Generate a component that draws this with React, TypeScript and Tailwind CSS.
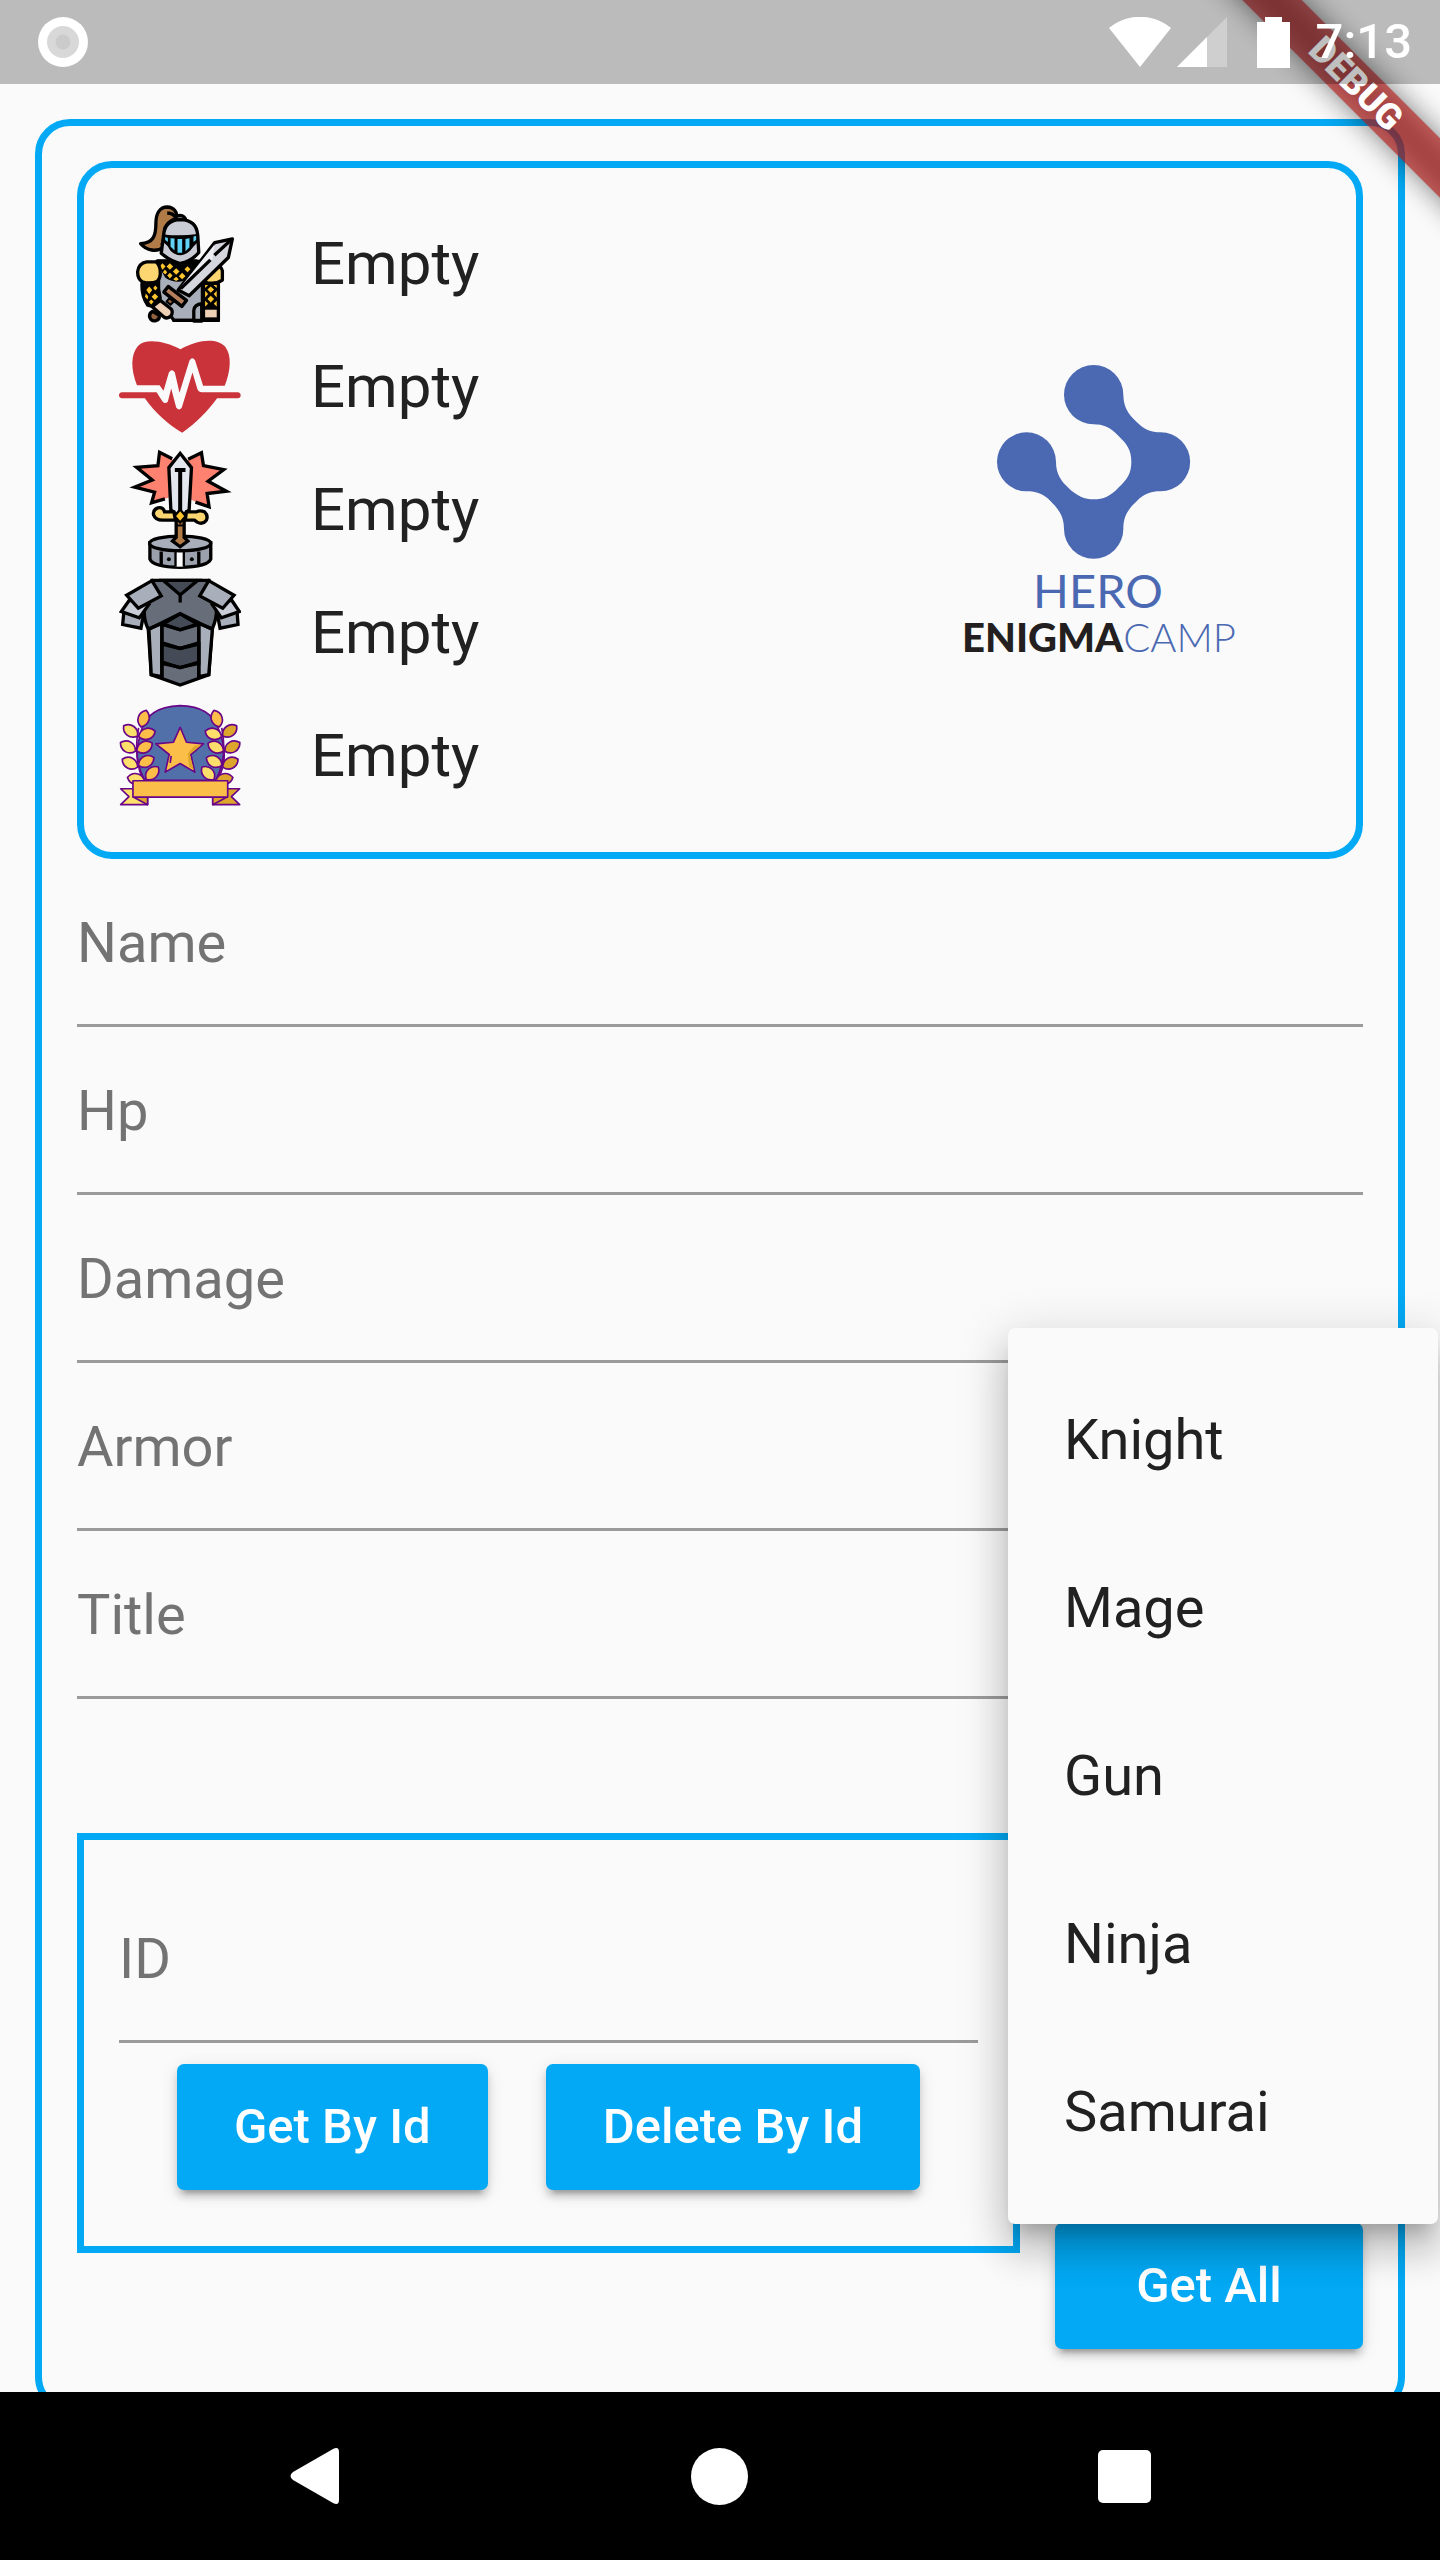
import { useState } from "react";
import type { ReactNode } from "react";

const ROBOTO = "font-[Roboto,'Liberation_Sans',sans-serif]";

function KnightIcon() {
  return (
    <svg viewBox="57 39 367 367" className="size-[122px] shrink-0" aria-hidden="true" stroke="#000" strokeWidth="10" strokeLinejoin="round">
      <path d="M228 86C235 66 222 52 202 51C180 51 168 70 168 100C168 138 160 160 122 161C140 182 170 188 192 172L194 120C198 104 210 92 228 86Z" fill="#b17b48" />
      <path d="M202 69Q222 70 226 82M186 165Q195 145 196 110" fill="none" />
      <path d="M225 92Q226 77 240 76Q256 77 258 92Z" fill="#8b909d" />
      <path d="M176 215H312V392H222L176 330Z" fill="#a9afba" />
      <path d="M172 213H290L270 258Q236 282 200 260Z" fill="#000" />
      <path d="M282 394V362Q284 344 306 342V394Z" fill="#a9afba" />
      <g fill="#fcc42c" stroke="none">
        <path d="M188 220l9 10-9 10-9-10zM210 220l10 10-10 10-10-10zM229 235l10 10-10 10-10-10zM210 249l8 8-8 9-8-9zM247 249l10 10-10 9-10-9zM263 229l9 9-9 9-9-9zM195 239l7 8-6 7-7-7zM229 261l8 7-8 6-9-6z" />
      </g>
      <path d="M140 216H168Q180 226 181 244Q183 265 171 275Q152 284 127 276Q113 268 113 246Q116 220 140 216Z" fill="#fcd771" />
      <path d="M126 282L172 280L181 325L158 350L143 346Q125 320 126 282Z" fill="#000" />
      <g fill="#fcc42c" stroke="none">
        <path d="M148 290l9 11-9 12-9-12zM165 311l10 10-10 10-10-10zM138 311l7 9-2 9-8-8zM154 329l7 7-7 8-7-8zM166 287l7 8-7 7-6-7z" />
      </g>
      <path d="M322 279Q308 270 310 255L342 226Q365 226 368 243V271Q348 284 322 279Z" fill="#fcd771" />
      <path d="M308 282H356V392H308Z" fill="#000" />
      <g fill="#fcc42c" stroke="none">
        <path d="M333 290l10 9-10 10-10-10zM333 318l10 10-10 10-10-10zM316 303l9 10-9 10zM351 303v20l-9-10zM316 333l9 9-9 8zM351 333v17l-9-8zM325 286h-9v9zM341 286h10v9z" />
      </g>
      <path d="M316 360H351V383H316Z" fill="#eed0b6" stroke="none" />
      <path d="M191 137Q194 90 242 89Q291 90 294 137L297 188Q275 214 241 221Q210 213 184 190Z" fill="#c9cbd5" />
      <path d="M192 136Q240 142 293 135L292 155Q281 165 270 180Q240 207 213 180Q205 164 193 156Z" fill="#000" strokeWidth="5" />
      <path d="M196 141l8 3v12l-8-6zM212 145l12 1v36l-12-12zM233 147h14v42h-14zM257 147l12-2v27l-12 12zM281 140l8-2v12l-8 6z" fill="#5fd3f5" stroke="none" />
      <path d="M235 301L345 158L398 147L386 203L268 318Z" fill="#d5d7df" />
      <path d="M240 295L345 163L338 208Z" fill="#eceef3" stroke="none" />
      <path d="M243 296L332 210M344 196L393 151" fill="none" />
      <path d="M205 290L260 332L246 350L192 307Z" fill="#b67f5c" />
      <path d="M209 325l12 11-9 9-12-10z" fill="#93603d" strokeWidth="6" />
      <path d="M181 332L214 358Q221 368 213 379Q203 389 192 382L157 351Z" fill="#eed0b6" />
      <path d="M158 365Q148 369 149 382Q154 396 168 393Q180 390 178 377Z" fill="#93603d" />
      <path d="M218 392H360" fill="none" />
    </svg>
  );
}

function HeartIcon() {
  return (
    <svg viewBox="57 2 367 367" className="size-[122px] shrink-0" aria-hidden="true">
      <path d="M242 72C292 44 350 36 376 64C398 92 392 140 375 182H310L286 106Q278 92 269 106L239 203L225 142Q216 128 207 142L191 197L179 180H111C92 132 92 88 114 62C138 38 196 48 242 72Z" fill="#ca333a" />
      <path d="M66 201H170L188 229Q196 239 204 229L214 190L229 247Q238 260 246 247L278 142L293 192Q297 201 306 201H414Q423 202 423 210Q423 219 414 219H352C324 257 292 291 247 323C206 298 164 262 135 219H66Q57 218 57 210Q57 202 66 201Z" fill="#ca333a" />
    </svg>
  );
}

function SwordIcon() {
  return (
    <svg viewBox="57 24 367 367" className="size-[122px] shrink-0" aria-hidden="true" stroke="#000" strokeWidth="10">
      <path d="M195 174L155 186L164 154L104 139L157 117L110 79L174 74L179 34L214 52L240 80L268 55L307 35L312 74L372 86L324 121L380 151L322 158L328 198L287 183L240 160Z" fill="#ff8170" stroke="none" />
      <path d="M195 174L155 186L164 154L104 139L157 117L110 79L174 74L179 34L217 53M265 55L305 35L311 74L372 86L325 121L380 151L322 158L328 198L287 184" fill="none" />
      <path d="M150 306V355Q160 379 241 380Q324 378 333 355V306Z" fill="#9ba1ad" />
      <path d="M184 332V372M297 332V372" />
      <path d="M226 334h27v44h-27z" fill="#fff" stroke="none" />
      <path d="M227 334V378M252 334V378" strokeWidth="7" />
      <ellipse cx="241" cy="308" rx="92" ry="22" fill="#a9afba" />
      <circle cx="207" cy="356" r="6" fill="#000" stroke="none" />
      <circle cx="276" cy="356" r="6" fill="#000" stroke="none" />
      <path d="M229 238H253V290L264 301L241 318L218 301L229 290Z" fill="#b17b48" />
      <path d="M229 254h24" strokeWidth="6" />
      <path d="M207 80L241 37L275 80L268 207L241 230L213 207Z" fill="#e4e7ee" />
      <path d="M225 87H257M241 87V210" strokeWidth="12" />
      <path d="M222 213H194Q190 198 174 201Q158 207 161 222Q168 240 192 238H227L222 213ZM260 213H290Q300 207 314 213Q326 224 320 238Q309 253 292 244L284 238H256Z" fill="#fcd771" />
      <path d="M241 206L258 226L241 245L224 226Z" fill="#fcc42c" strokeWidth="7" />
    </svg>
  );
}

function ArmorIcon() {
  return (
    <svg viewBox="57 17 367 367" className="size-[122px] shrink-0" aria-hidden="true" stroke="#000" strokeWidth="10">
      <path d="M156 42H328L350 125Q352 158 337 189L327 326L241 357L154 326L145 189Q131 160 133 130Z" fill="#676e7a" />
      <path d="M190 42H294L241 86Z" fill="#454b56" />
      <path d="M241 84V109" />
      <path d="M147 188L186 172V332L154 326ZM338 188L297 172V332L327 326Z" fill="#a9afba" />
      <path d="M186 234L241 247L297 234V292L241 304L186 292Z" fill="#454b56" />
      <path d="M241 143L293 174L241 191L189 174Z" fill="#454b56" />
      <path d="M145 190L241 142L338 190M187 175L241 191L296 175M187 230L241 247L297 230M187 288L241 305L297 288M186 170V336M297 170V336" fill="none" />
      <path d="M72 134L130 150L123 186L68 175ZM412 134L354 150L361 186L415 175Z" fill="#a9afba" />
      <path d="M88 102L64 136L118 155L146 116ZM396 102L419 136L365 155L338 116Z" fill="#c9cdd6" />
      <path d="M156 43L184 89L115 126L80 87ZM327 43L300 89L369 126L403 87Z" fill="#a9afba" />
    </svg>
  );
}

const LEAF = "M-26 0C-14 -22 14 -22 26 0C14 22 -14 22 -26 0Z";
const ORANGE = "#fbbf49";
const YELLOW = "#fddf6b";
const GOLD = "#dda52b";
/* Laurel leaves of the left branch; the right branch mirrors them about x = 241. */
const LEAVES = [
  { x: 108, y: 264, angle: 10, left: YELLOW, right: GOLD },
  { x: 157, y: 246, angle: -45, left: ORANGE, right: YELLOW },
  { x: 90, y: 216, angle: 27, left: YELLOW, right: GOLD },
  { x: 139, y: 211, angle: -27, left: ORANGE, right: YELLOW },
  { x: 84, y: 167, angle: 30, left: YELLOW, right: GOLD },
  { x: 134, y: 168, angle: -28, left: ORANGE, right: YELLOW },
  { x: 92, y: 119, angle: 36, left: YELLOW, right: GOLD },
  { x: 141, y: 128, angle: -18, left: ORANGE, right: YELLOW },
  { x: 131, y: 82, angle: -72, left: ORANGE, right: ORANGE },
];

function AwardIcon() {
  return (
    <svg viewBox="57 11 367 367" className="size-[122px] shrink-0" aria-hidden="true" stroke="#6a0488" strokeWidth="5" strokeLinejoin="round">
      <path d="M130 268Q98 200 122 125Q140 46 240 43Q336 44 358 118Q392 200 352 268Z" fill="#5170aa" />
      <path d="M116 110Q98 200 134 268M366 110Q384 200 348 268" fill="none" />
      {LEAVES.map((leaf) => (
        <g key={leaf.y}>
          <path d={LEAF} fill={leaf.left} transform={`translate(${leaf.x} ${leaf.y}) rotate(${leaf.angle})`} />
          <path d={LEAF} fill={leaf.right} transform={`translate(${482 - leaf.x} ${leaf.y}) scale(-1 1) rotate(${leaf.angle})`} />
        </g>
      ))}
      <path d="M241 108L260 153L311 158L273 190L285 243L241 217L196 243L208 190L168 158L221 153Z" fill={ORANGE} />
      <path d="M303 163L270 190L282 236L268 226L264 188L285 163Z" fill={GOLD} stroke="none" />
      <path d="M214 194L211 215" fill="none" />
      <path d="M62 293H143V341H62L87 317Z" fill={YELLOW} />
      <path d="M420 293H339V341H420L395 317Z" fill={GOLD} />
      <path d="M100 318H143V341ZM382 318H339V341Z" fill={GOLD} />
      <path d="M99 269H384V318H99Z" fill={ORANGE} />
    </svg>
  );
}

function EnigmaLogo() {
  return (
    <svg viewBox="0 0 320 320" className="size-[320px]" role="img" aria-label="Hero Enigma Camp">
      <path
        transform="scale(0.33333)"
        fill="#4b69b2"
        d="M461 45A89 89 0 0 1 550 134C550 180 575 200 590 216C612 238 632 247 662 247A88.500 88.500 0 0 1 662 424C632 424 612 431 590 454C563 479 550 500 550 537A89 89 0 0 1 372 537C372 500 357 479 332 454C310 431 290 424 260 424A88.500 88.500 0 1 1 348 335C348 370 362 392 385 413C410 438 435 448 461 448C490 448 512 438 535 413C562 388 574 370 574 335C574 300 562 283 535 257C510 232 490 223 461 223A89 89 0 0 1 461 45Z"
      />
      <text x="158" y="258" textAnchor="middle" fill="#4b69b2" fontFamily="Lato, sans-serif" fontSize="47">
        HERO
      </text>
      <text x="22" y="302" fontFamily="Lato, sans-serif" fontSize="40">
        <tspan fontWeight="900" fill="#231f20">ENIGMA</tspan>
        <tspan fontWeight="300" fill="#4b69b2">CAMP</tspan>
      </text>
    </svg>
  );
}

function StatusBar() {
  return (
    <header className="relative z-20 flex h-[84px] shrink-0 items-center justify-between bg-black/25 pr-7 pl-[38px] text-white">
      <svg viewBox="0 0 50 50" className="size-[50px]" aria-hidden="true">
        <circle cx="25" cy="25" r="25" fill="#fff" />
        <circle cx="25" cy="25" r="16" fill="#d8d8d8" />
        <circle cx="25" cy="25" r="7.500" fill="#cbcbcb" />
      </svg>
      <div className="flex items-center">
        <svg viewBox="0 0 62 50" className="h-[50px] w-[62px]" aria-label="Wi-Fi" role="img">
          <path d="M31 50L0 11C18 -4 44 -4 62 11Z" fill="#fff" />
        </svg>
        <svg viewBox="0 0 50 50" className="ml-[6px] size-[50px]" aria-label="Signal" role="img">
          <path d="M0 50L50 0V50Z" fill="#fff" fillOpacity="0.300" />
          <path d="M0 50L30 20V50Z" fill="#fff" />
        </svg>
        <svg viewBox="0 0 33 51" className="ml-[30px] h-[51px] w-[33px]" aria-label="Battery" role="img">
          <path d="M8 0H25V5H33V51H0V5H8Z" fill="#fff" />
        </svg>
        <time className="ml-[26px] text-[49px] leading-[60px] font-medium">7:13</time>
      </div>
    </header>
  );
}

function DebugBanner() {
  return (
    <div className="pointer-events-none absolute top-[63px] -right-[216px] z-10 h-[42px] w-[600px] rotate-45">
      <div className="absolute inset-0 bg-black/50 blur-[14px]" />
      <div className="relative flex h-full items-center justify-center bg-[#b71c1c]/63 text-4xl font-black text-white">DEBUG</div>
    </div>
  );
}

function Field({ label }: { label: string }) {
  const id = `field-${label.toLowerCase()}`;
  return (
    <div className="relative">
      <input
        id={id}
        placeholder=" "
        className="peer block h-[168px] w-full border-b-[3px] border-[#9b9b9b] bg-transparent text-[56px] text-[#212121] outline-none"
      />
      <label
        htmlFor={id}
        className="pointer-events-none absolute inset-0 flex items-center text-[56px] leading-[66px] text-[#737373] peer-[:not(:placeholder-shown)]:hidden"
      >
        {label}
      </label>
    </div>
  );
}

function RaisedButton({ children }: { children: ReactNode }) {
  return (
    <button
      type="button"
      className="h-[126px] rounded-[7px] bg-[#03a9f4] px-[57px] text-[49px] font-medium whitespace-nowrap text-white shadow-[0_10px_4px_-7px_rgba(0,0,0,0.2),0_7px_7px_0_rgba(0,0,0,0.14),0_4px_17px_0_rgba(0,0,0,0.12)]"
    >
      {children}
    </button>
  );
}

const STATS = [
  { key: "name", Icon: KnightIcon },
  { key: "hp", Icon: HeartIcon },
  { key: "damage", Icon: SwordIcon },
  { key: "armor", Icon: ArmorIcon },
  { key: "title", Icon: AwardIcon },
];
const FIELDS = ["Name", "Hp", "Damage", "Armor", "Title"];
const CLASSES = ["Knight", "Mage", "Gun", "Ninja", "Samurai"];

function ClassMenu({ onSelect }: { onSelect: (name: string) => void }) {
  return (
    <div
      role="menu"
      className="absolute top-[1244px] right-[2px] z-10 flex w-[430px] flex-col rounded-[7px] bg-[#fafafa] py-7 shadow-[0_17px_17px_-10px_rgba(0,0,0,0.2),0_28px_35px_4px_rgba(0,0,0,0.14),0_10px_49px_7px_rgba(0,0,0,0.12)]"
    >
      {CLASSES.map((name) => (
        <button key={name} type="button" role="menuitem" onClick={() => onSelect(name)} className="h-[168px] px-14 text-left text-[56px] text-[#212121]">
          {name}
        </button>
      ))}
    </div>
  );
}

export default function App() {
  const [, setHeroClass] = useState("");
  return (
    <div className={`relative flex h-screen flex-col overflow-hidden bg-[#fafafa] ${ROBOTO}`}>
      <StatusBar />
      <DebugBanner />
      <main className="relative min-h-0 flex-1 overflow-hidden">
        <div className="m-[35px] rounded-[35px] border-[7px] border-[#03a9f4] p-[35px]">
          <section className="flex items-center justify-between rounded-[35px] border-[7px] border-[#03a9f4] p-[35px]">
            <ul className="grid h-[614px] auto-rows-fr">
              {STATS.map(({ key, Icon }) => (
                <li key={key} className="flex items-center gap-[70px] text-[60px] leading-[70px] text-[#212121]">
                  <Icon />
                  <span>Empty</span>
                </li>
              ))}
            </ul>
            <div className="flex w-[442px] justify-center">
              <EnigmaLogo />
            </div>
          </section>
          <form>
            {FIELDS.map((label) => (
              <Field key={label} label={label} />
            ))}
            <div className="flex gap-[35px] pt-[134px]">
              <section className="min-w-0 flex-1 self-start border-[7px] border-[#03a9f4] p-[35px]">
                <Field label="ID" />
                <div className="flex h-[168px] items-center justify-evenly">
                  <RaisedButton>Get By Id</RaisedButton>
                  <RaisedButton>Delete By Id</RaisedButton>
                </div>
              </section>
              <div className="flex h-[537px] w-[308px] flex-col justify-end pb-[21px]">
                <RaisedButton>Get All</RaisedButton>
              </div>
            </div>
          </form>
        </div>
        <ClassMenu onSelect={setHeroClass} />
      </main>
      <nav className="relative z-20 grid h-[168px] shrink-0 grid-cols-3 items-center justify-items-center bg-black px-[113px]">
        <button type="button" aria-label="Back">
          <svg viewBox="0 0 50 58" className="h-[58px] w-[50px]" aria-hidden="true">
            <path d="M43 2Q49 -1 49 5V53Q49 59 43 56L3 33Q-2 29 3 25Z" fill="#fff" />
          </svg>
        </button>
        <button type="button" aria-label="Home" className="size-[57px] rounded-full bg-white" />
        <button type="button" aria-label="Recent apps" className="size-[53px] rounded-[5px] bg-white" />
      </nav>
    </div>
  );
}
